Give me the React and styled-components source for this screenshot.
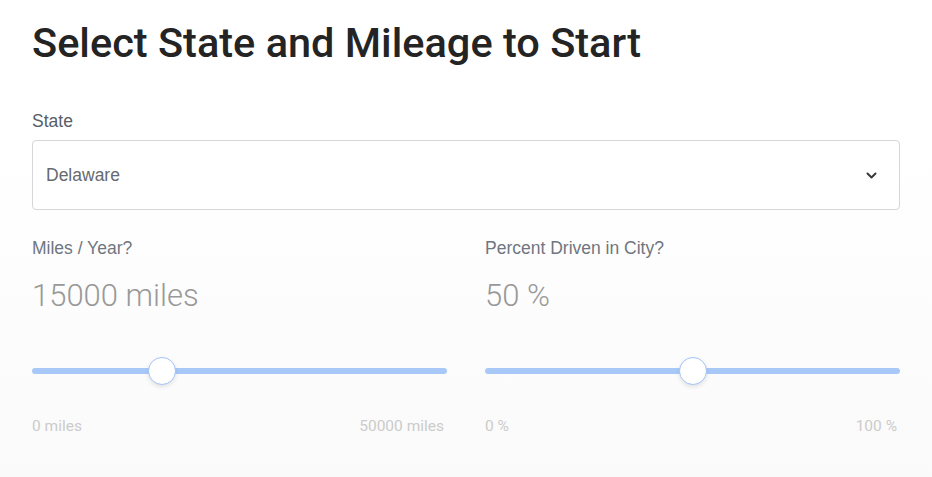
import React from "react";
import styled, { createGlobalStyle } from "styled-components";

const GlobalStyle = createGlobalStyle`
  html, body {
    margin: 0;
    padding: 0;
    background: #ffffff;
  }
  body {
    font-family: Roboto, "Liberation Sans", Arial, sans-serif;
  }
`;

const Page = styled.div`
  width: 932px;
  height: 477px;
  box-sizing: border-box;
  padding: 18px 32px 0 32px;
  background: linear-gradient(to bottom, #ffffff 0%, #ffffff 30%, #fafafa 100%);
`;

const Title = styled.h1`
  margin: 0;
  font-size: 41.5px;
  font-weight: 500;
  color: #242424;
  line-height: 49px;
`;

const Field = styled.div`
  margin-top: 43px;
`;

const Label = styled.div`
  font-family: "Liberation Sans", Arial, sans-serif;
  font-size: 17.5px;
  color: ${(p) => p.$color || "#6f7680"};
  line-height: 22px;
`;

const SelectBox = styled.div`
  margin-top: 8px;
  height: 70px;
  box-sizing: border-box;
  border: 1px solid #d4d6da;
  border-radius: 4px;
  display: flex;
  align-items: center;
  justify-content: space-between;
  padding: 0 22px 0 13px;
  background: #ffffff;
  font-family: "Liberation Sans", Arial, sans-serif;
  font-size: 17.5px;
  color: #666a70;
`;

const Columns = styled.div`
  display: grid;
  grid-template-columns: 1fr 1fr;
  column-gap: 38px;
  margin-top: 27px;
`;

const Value = styled.div`
  margin-top: 19px;
  font-size: 31px;
  font-weight: 300;
  color: #999999;
  line-height: 36px;
`;

const SliderWrap = styled.div`
  position: relative;
  margin-top: 43px;
  height: 28px;
  display: flex;
  align-items: center;
`;

const Track = styled.div`
  width: 100%;
  height: 6px;
  border-radius: 3px;
  background: #a8c9f7;
`;

const Thumb = styled.div`
  position: absolute;
  top: 0;
  width: 28px;
  height: 28px;
  box-sizing: border-box;
  border-radius: 50%;
  background: #ffffff;
  border: 1px solid #a3c4f5;
  box-shadow: 0 2px 4px rgba(0, 0, 0, 0.1);
`;

const Range = styled.div`
  display: flex;
  justify-content: space-between;
  margin-top: 31px;
  padding-right: 3px;
  font-size: 15.5px;
  line-height: 20px;
  color: #cbcbcb;
`;

const Chevron = () => (
  <svg width="11" height="7" viewBox="0 0 11 7" fill="none" stroke="#3a3a3a" strokeWidth="2" strokeLinecap="round" strokeLinejoin="round">
    <path d="M1.5 1.5l4 4 4-4" />
  </svg>
);

const Slider = ({ value, max }) => {
  const frac = value / max;
  return (
    <SliderWrap>
      <Track />
      <Thumb style={{ left: `calc(${frac} * (100% - 28px))` }} />
    </SliderWrap>
  );
};

const SliderField = ({ label, value, unit, max, maxLabel, minLabel }) => (
  <div>
    <Label>{label}</Label>
    <Value>
      {value} {unit}
    </Value>
    <Slider value={value} max={max} />
    <Range>
      <span>{minLabel}</span>
      <span>{maxLabel}</span>
    </Range>
  </div>
);

export default function App() {
  return (
    <>
      <GlobalStyle />
      <Page>
        <Title>Select State and Mileage to Start</Title>
        <Field>
          <Label $color="#575e68">State</Label>
          <SelectBox>
            <span>Delaware</span>
            <Chevron />
          </SelectBox>
        </Field>
        <Columns>
          <SliderField
            label="Miles / Year?"
            value={15000}
            unit="miles"
            max={50000}
            minLabel="0 miles"
            maxLabel="50000 miles"
          />
          <SliderField
            label="Percent Driven in City?"
            value={50}
            unit="%"
            max={100}
            minLabel="0 %"
            maxLabel="100 %"
          />
        </Columns>
      </Page>
    </>
  );
}
